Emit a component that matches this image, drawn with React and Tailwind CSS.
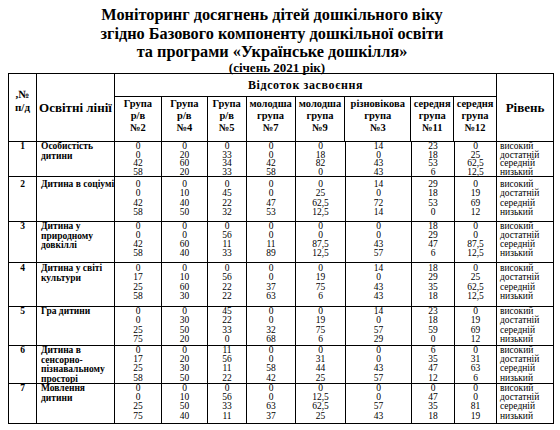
const groups = [
  { w: "w-[47px]", lines: ["Група", "р/в", "№2"] },
  { w: "w-[46px]", lines: ["Група", "р/в", "№4"] },
  { w: "w-[39px]", lines: ["Група", "р/в", "№5"] },
  { w: "w-[49px]", lines: ["молодша", "група", "№7"] },
  { w: "w-[50px]", lines: ["молодша", "група", "№9"] },
  { w: "w-[66px]", lines: ["різновікова", "група", "№3"] },
  { w: "w-[43px]", lines: ["середня", "група", "№11"] },
  { w: "w-[42px]", lines: ["середня", "група", "№12"] },
];

const levels = ["високий", "достатній", "середній", "низький"];

// every row: number, title lines, row height, top padding, line height, values for the 8 groups
const rows = [
  {
    n: 1,
    title: ["Особистість", "дитини"],
    h: "h-[35px]",
    pt: "pt-[0px]",
    lh: "leading-[8.7px]",
    values: [
      ["0", "0", "42", "58"],
      ["0", "20", "60", "20"],
      ["0", "33", "34", "33"],
      ["0", "0", "42", "58"],
      ["0", "18", "82", "0"],
      ["14", "0", "43", "43"],
      ["23", "18", "53", "6"],
      ["0", "25", "62,5", "12,5"],
    ],
  },
  {
    n: 2,
    title: ["Дитина в соціумі"],
    h: "h-[45px]",
    pt: "pt-[3px]",
    lh: "leading-[9.3px]",
    values: [
      ["0", "0", "42", "58"],
      ["0", "10", "40", "50"],
      ["0", "45", "22", "32"],
      ["0", "0", "47", "53"],
      ["0", "25", "62,5", "12,5"],
      ["14", "0", "72", "14"],
      ["29", "18", "53", "0"],
      ["0", "19", "69", "12"],
    ],
  },
  {
    n: 3,
    title: ["Дитина у", "природному", "довкіллі"],
    h: "h-[41px]",
    pt: "pt-[0px]",
    lh: "leading-[9.1px]",
    values: [
      ["0", "0", "42", "58"],
      ["0", "0", "60", "40"],
      ["0", "56", "11", "33"],
      ["0", "0", "11", "89"],
      ["0", "0", "87,5", "12,5"],
      ["0", "0", "43", "57"],
      ["18", "29", "47", "6"],
      ["0", "0", "87,5", "12,5"],
    ],
  },
  {
    n: 4,
    title: ["Дитина у світі", "культури"],
    h: "h-[44px]",
    pt: "pt-[1px]",
    lh: "leading-[9.3px]",
    values: [
      ["0", "17", "25", "58"],
      ["0", "10", "60", "30"],
      ["0", "56", "22", "22"],
      ["0", "0", "37", "63"],
      ["0", "19", "75", "6"],
      ["14", "0", "43", "43"],
      ["18", "29", "35", "18"],
      ["0", "25", "62,5", "12,5"],
    ],
  },
  {
    n: 5,
    title: ["Гра дитини"],
    h: "h-[39px]",
    pt: "pt-[0px]",
    lh: "leading-[9.3px]",
    values: [
      ["0", "0", "25", "75"],
      ["0", "30", "50", "20"],
      ["45", "22", "33", "0"],
      ["0", "0", "32", "68"],
      ["0", "19", "75", "6"],
      ["14", "0", "57", "29"],
      ["23", "18", "59", "0"],
      ["0", "19", "69", "12"],
    ],
  },
  {
    n: 6,
    title: ["Дитина в", "сенсорно-", "пізнавальному", "просторі"],
    h: "h-[38px]",
    pt: "pt-[0px]",
    lh: "leading-[9.2px]",
    values: [
      ["0", "17", "25", "58"],
      ["0", "20", "30", "50"],
      ["11", "56", "11", "22"],
      ["0", "0", "58", "42"],
      ["0", "31", "44", "25"],
      ["0", "0", "43", "57"],
      ["6", "35", "47", "12"],
      ["0", "31", "63", "6"],
    ],
  },
  {
    n: 7,
    title: ["Мовлення", "дитини"],
    h: "h-[40px]",
    pt: "pt-[0px]",
    lh: "leading-[9.2px]",
    values: [
      ["0", "0", "25", "75"],
      ["0", "10", "50", "40"],
      ["0", "56", "33", "11"],
      ["0", "0", "63", "37"],
      ["0", "12,5", "62,5", "25"],
      ["0", "0", "57", "43"],
      ["0", "47", "35", "18"],
      ["0", "0", "81", "19"],
    ],
  },
];

const App = () => {
  return (
    <div className="w-[560px] h-[430px] overflow-hidden bg-white text-black font-['Liberation_Serif',serif]">
      {/* title */}
      <div className="h-[73px] pt-[6px] pr-[16px] text-center font-bold">
        <div className="text-[16.3px] leading-[18.5px]">Моніторинг досягнень дітей дошкільного віку</div>
        <div className="text-[16.3px] leading-[18.5px]">згідно Базового компоненту дошкільної освіти</div>
        <div className="text-[16.3px] leading-[18.5px]">та програми «Українське дошкілля»</div>
        <div className="text-[13px] leading-[12px] pl-[10px]">(січень 2021 рік)</div>
      </div>

      {/* table */}
      <div className="ml-[8px] w-[546px] border-l border-t border-black">
        <div className="flex h-[68px] border-b border-black">
          <div className="w-[28px] border-r border-black pt-[14px] text-center text-[11px] leading-[13px] font-bold">
            <div>,№</div>
            <div>
              п/<span className="underline decoration-wavy decoration-red-600 decoration-[1px]">д</span>
            </div>
          </div>
          <div className="w-[78px] border-r border-black flex items-center justify-center text-[13px] font-bold">
            Освітні лінії
          </div>
          <div className="w-[382px] border-r border-black flex flex-col">
            <div className="h-[23px] border-b border-black flex items-center justify-center text-[12px] font-bold tracking-[0.6px]">
              Відсоток засвоєння
            </div>
            <div className="flex flex-1">
              {groups.map((g, i) => (
                <div
                  key={i}
                  className={`${g.w} ${i < 7 ? "border-r border-black" : ""} pt-[1px] text-center text-[10.5px] leading-[12px] font-bold`}
                >
                  {g.lines.map((line, j) => (
                    <div key={j}>{line}</div>
                  ))}
                </div>
              ))}
            </div>
          </div>
          <div className="w-[57px] border-r border-black flex items-center justify-center text-[13px] font-bold">
            Рівень
          </div>
        </div>

        {rows.map((row) => (
          <div key={row.n} className={`flex ${row.h} border-b border-black`}>
            <div className={`w-[28px] border-r border-black text-center font-bold text-[9.5px] ${row.lh} ${row.pt}`}>
              {row.n}
            </div>
            <div className={`w-[78px] border-r border-black pl-[4px] font-bold text-[9.5px] leading-[9.5px] ${row.pt}`}>
              {row.title.map((line, j) => (
                <div key={j} className="whitespace-nowrap">{line}</div>
              ))}
            </div>
            {row.values.map((vals, i) => (
              <div key={i} className={`${groups[i].w} border-r border-black text-center text-[9.5px] ${row.lh} ${row.pt}`}>
                {vals.map((v, j) => (
                  <div key={j}>{v}</div>
                ))}
              </div>
            ))}
            <div className={`w-[57px] border-r border-black pl-[3px] text-[9.5px] ${row.lh} ${row.pt}`}>
              {levels.map((l) => (
                <div key={l} className="whitespace-nowrap">{l}</div>
              ))}
            </div>
          </div>
        ))}
      </div>
    </div>
  );
};

export default App;
